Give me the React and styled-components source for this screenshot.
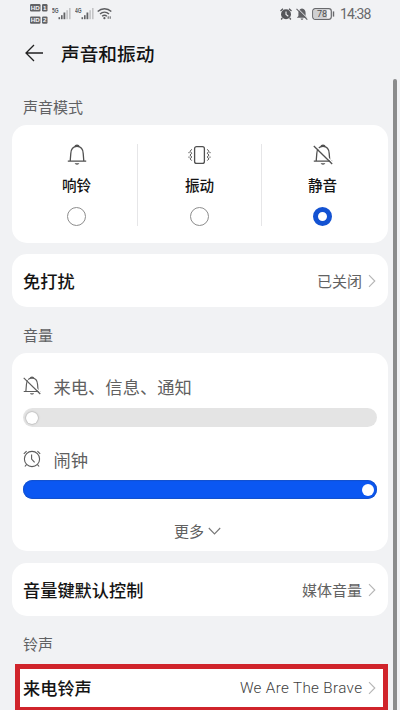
import React from "react";
import styled, { createGlobalStyle } from "styled-components";

const Global = createGlobalStyle`
  * { box-sizing: border-box; }
  html, body { margin: 0; height: 710px; overflow: hidden; background: #f1f2f4; }
  body { font-family: "Noto Sans CJK SC", sans-serif; color: #141414; }
  svg { display: block; flex: none; }
`;

const Screen = styled.div`
  width: 400px;
  height: 710px;
  overflow: hidden;
  display: flex;
  flex-direction: column;
`;

const StatusBar = styled.header`
  height: 28px;
  flex: none;
  display: flex;
  justify-content: space-between;
  padding: 0 29px 0 30px;
`;

const StatusGroup = styled.div`
  display: flex;
  align-items: center;
`;

const Clock = styled.span`
  font: 400 14px/20px Roboto, sans-serif;
  color: #68696b;
  width: 31px;
  white-space: nowrap;
  margin-left: 1px;
  letter-spacing: -0.85px;
`;

const TitleBar = styled.div`
  height: 51px;
  flex: none;
  display: flex;
  align-items: center;
  gap: 17px;
  padding: 0 0 1px 25px;
`;

const Title = styled.h1`
  margin: 0;
  font-size: 18.7px;
  line-height: 28px;
  font-weight: 500;
`;

const Body = styled.div`
  flex: 1;
  min-height: 0;
  display: flex;
  justify-content: space-between;
`;

const Content = styled.main`
  width: 376px;
  margin-left: 12px;
  display: flex;
  flex-direction: column;
`;

const ScrollBar = styled.div`
  width: 4px;
  margin-right: 3px;
  border-radius: 2px 2px 0 0;
  background: #8b8c8c;
`;

const SectionLabel = styled.h2`
  margin: 0;
  height: ${(p) => p.$height}px;
  padding: 17px 0 0 11px;
  flex: none;
  font-size: 15px;
  line-height: 22px;
  font-weight: 400;
  color: #606163;
`;

const Card = styled.section`
  flex: none;
  background: #fff;
  border-radius: 15px;
`;

const ModeCard = styled(Card)`
  height: 118px;
  display: grid;
  grid-template-columns: 126px 124px 126px;
  padding: 19px 0;
  margin-bottom: 11px;
`;

const Mode = styled.div`
  display: flex;
  flex-direction: column;
  align-items: center;
  border-right: ${(p) => (p.$last ? "0" : "1px solid #e6e6e8")};
  padding-left: ${(p) => p.$start || 0}px;
  padding-right: ${(p) => p.$end || 0}px;
`;

const ModeName = styled.span`
  font-size: 14.6px;
  line-height: 22px;
  font-weight: 500;
  margin: 8px 0 11px;
`;

const Radio = styled.span`
  width: 19px;
  height: 19px;
  border-radius: 50%;
  background: #fff;
  border: ${(p) => (p.$on ? "5px solid #1352d2" : "1px solid #8d8d8d")};
`;

const Row = styled(Card)`
  height: 53px;
  display: flex;
  align-items: center;
  justify-content: space-between;
  padding: 0 12px 0 11px;
`;

const RowName = styled.span`
  font-size: 17.2px;
  line-height: 26px;
  font-weight: 500;
`;

const RowValue = styled.span`
  display: flex;
  align-items: center;
  gap: 6px;
  font-size: 15px;
  line-height: 22px;
  color: #626262;
`;

const LatinValue = styled.span`
  font-family: Roboto, sans-serif;
  font-weight: 300;
  font-size: 15.2px;
  letter-spacing: 0.35px;
  margin-right: -0.35px;
  color: #404040;
`;

const VolumeCard = styled(Card)`
  height: 198px;
  padding: 20px 11px 0;
  margin-bottom: 12px;
`;

const Channel = styled.div`
  display: flex;
  align-items: center;
  gap: 12.5px;
  height: 26px;
  font-size: 17.3px;
  color: #606060;
`;

const Track = styled.div`
  height: 19px;
  border-radius: 10px;
  margin: ${(p) => p.$gap};
  padding: 0 3px;
  display: flex;
  align-items: center;
  justify-content: ${(p) => (p.$full ? "flex-end" : "flex-start")};
  background: ${(p) => (p.$full ? "#0b57f2" : "#e4e4e4")};
  box-shadow: ${(p) => (p.$full ? "inset 0 0 1px 1px #1552cc" : "none")};
`;

const Thumb = styled.span`
  width: 12px;
  height: 12px;
  border-radius: 50%;
  background: #fff;
  box-shadow: ${(p) => (p.$shadow ? "0 0 1.5px 0.5px #a9a9a9" : "none")};
`;

const More = styled.div`
  display: flex;
  align-items: center;
  justify-content: center;
  gap: 4px;
  padding-right: 5px;
  font-size: 15px;
  line-height: 22px;
  color: #606060;
`;

const Highlight = styled.div`
  flex: none;
  width: 373px;
  height: 46px;
  margin-left: 3px;
  border: 5px solid #d0242b;
  border-bottom-width: 3px;
  background: #fff;
  display: flex;
  align-items: center;
  justify-content: space-between;
  padding: 0 7px 0 3px;
`;

const Chevron = () => (
  <svg width="8" height="14" viewBox="0 0 8 14" fill="none" stroke="#b5b5b5" strokeWidth="1.1">
    <path d="M1 1.2 6.8 7 1 12.8" />
  </svg>
);

const Bell = ({ off, size = 20, color = "#505050" }) => (
  <svg width={size} height={size * 1.1} viewBox="0 0 20 22" fill="none" stroke={color} strokeWidth="1.3">
    <path d="M.8 17.2h18.4M3.2 17l.6-7.5C4 5.2 6.3 2.3 10 2.3s6 2.9 6.2 7.2l.6 7.5M8 2.4C8.3.7 11.7.7 12 2.4" />
    <path d="M7.7 19.2h4.6c-.4 1.9-4.2 1.9-4.6 0Z" fill={color} stroke="none" />
    {off && <path d="M2.2 1.2 20 19" stroke="#fff" strokeWidth="1.4" />}
    {off && <path d="m.8 2 18.4 18" />}
  </svg>
);

const Vibrate = () => (
  <svg width="23" height="22" viewBox="0 0 23 22" fill="none" stroke="#505050" strokeWidth="1.3">
    <rect x="6.6" y="2.6" width="9.8" height="16.8" rx="2" />
    <path d="m3.7 5.3-1.6 2 1.6 1.9-1.6 1.9 1.6 1.9-1.6 1.9 1.6 1.7M1 8v1.2M1 12.5v1.3M19.3 5.3l1.6 2-1.6 1.9 1.6 1.9-1.6 1.9 1.6 1.9-1.6 1.7M22 8v1.2M22 12.5v1.3" strokeWidth="1" />
  </svg>
);

const Alarm = () => (
  <svg width="18" height="18" viewBox="0 0 18 18" fill="none" stroke="#5c5c5c" strokeWidth="1.1">
    <circle cx="9" cy="9" r="7.6" />
    <path d="M8.6 4.5V9l3 3.4M.8 3.8 3.6 1.1M14.4 1.1l2.8 2.7M3.5 14.7l-1.6 1.8M14.5 14.7l1.6 1.8" />
  </svg>
);

const Back = () => (
  <svg width="19" height="18" viewBox="0 0 19 18" fill="none" stroke="#202020" strokeWidth="1.3">
    <path d="M9 1 1 9l8 8M1 9h17" />
  </svg>
);

const SimLabels = () => (
  <svg width="19" height="22" viewBox="0 0 19 22" fontFamily="Liberation Sans, sans-serif" fontWeight="700" fontSize="6.2" fill="#f5f5f6">
    <g fill="#626366">
      <rect width="10.5" height="7.4" rx="1.2" />
      <rect x="12" width="5.5" height="7.4" rx="1.2" />
      <rect y="12.4" width="10.5" height="7.4" rx="1.2" />
      <rect x="12" y="12.4" width="5.5" height="7.4" rx="1.2" />
    </g>
    <text x=".8" y="5.9">HD</text>
    <text x="13" y="5.9">1</text>
    <text x=".8" y="18.3">HD</text>
    <text x="13" y="18.3">2</text>
  </svg>
);

const Signal = ({ label }) => (
  <svg width="19.5" height="14" viewBox="0 0 19.5 14">
    <text x="0" y="5.9" fontFamily="Liberation Sans, sans-serif" fontWeight="700" fontSize="6.8" textLength="6.6" lengthAdjust="spacingAndGlyphs" fill="#58595c">{label}</text>
    <g fill="#626366">
      <rect x="6.5" y="10.2" width="1.6" height="2" />
      <rect x="9" y="8.2" width="1.6" height="4" />
      <rect x="11.5" y="5.5" width="1.8" height="6.7" />
    </g>
    <g fill="#c3c4c6">
      <rect x="14.3" y="3.2" width="1.6" height="9" />
      <rect x="17" y="1" width="1.6" height="11.2" />
    </g>
  </svg>
);

const Wifi = () => (
  <svg width="15" height="13" viewBox="0 0 15 13" fill="none" stroke="#5c5d60" strokeWidth="1.4">
    <path d="M.7 4.5c3.8-3.7 9.8-3.7 13.6 0M3 7c2.6-2.4 6.4-2.4 9 0M5.1 9.2c1.4-1.2 3.4-1.2 4.8 0" />
    <circle cx="7.4" cy="11.2" r="1.1" fill="#5c5d60" stroke="none" />
    <path d="M11.2 9.3v2.5M13.2 9.3v2.5" strokeWidth="1" />
  </svg>
);

const StatusAlarm = () => (
  <svg width="12" height="12" viewBox="0 0 12 12">
    <circle cx="6" cy="6.3" r="5" fill="#55565a" />
    <path d="M6 3.4v3.1l2.3 1.8" fill="none" stroke="#f1f2f4" strokeWidth="1.1" />
    <path d="M.5 3 3 .7M9 .7 11.5 3M2.3 10l-1.1 1.5M9.7 10l1.1 1.5" stroke="#55565a" strokeWidth="1.3" />
  </svg>
);

const StatusMute = () => (
  <svg width="12" height="12" viewBox="0 0 12 12">
    <path d="M6 .5C3.5.8 2.4 2.5 2.4 5v3L.8 9.7h10.4L9.6 8V5C9.6 2.5 8.5.8 6 .5ZM4.6 10.4h2.8c-.2 1.7-2.6 1.7-2.8 0Z" fill="#606165" />
    <path d="M1.6.3 12 10.7" stroke="#f1f2f4" strokeWidth="1" />
    <path d="m.5.8 10.8 10.8" stroke="#606165" strokeWidth="1.1" />
  </svg>
);

const Battery = () => (
  <svg width="23" height="12" viewBox="0 0 23 12">
    <rect x=".7" y=".7" width="18.6" height="10.6" rx="2.5" fill="#f1f2f4" stroke="#68696c" strokeWidth="1.2" />
    <path d="M2 2h13v8H2z" fill="#cfd0d2" />
    <rect x="20.8" y="3.4" width="1.4" height="5.2" fill="#68696c" />
    <text x="5" y="9.2" fontFamily="Roboto, sans-serif" fontSize="9" fill="#4d4e51">78</text>
  </svg>
);

const MoreArrow = () => (
  <svg width="13" height="9" viewBox="0 0 13 9" fill="none" stroke="#777" strokeWidth="1.1">
    <path d="m.8 1 5.7 6 5.7-6" />
  </svg>
);

const StatusLeft = styled(StatusGroup)`
  gap: 3px;
  align-items: flex-start;
  padding-top: 4px;
`;

const Drop = styled.span`
  padding-top: 3px;
`;

const StatusRight = styled(StatusGroup)`
  gap: 4px;
`;

export default function App() {
  return (
    <Screen>
      <Global />
      <StatusBar>
        <StatusLeft>
          <SimLabels />
          <Drop><Signal label="5G" /></Drop>
          <Drop><Signal label="4G" /></Drop>
          <Drop><Wifi /></Drop>
        </StatusLeft>
        <StatusRight>
          <StatusAlarm />
          <StatusMute />
          <Battery />
          <Clock>14:38</Clock>
        </StatusRight>
      </StatusBar>
      <TitleBar>
        <Back />
        <Title>声音和振动</Title>
      </TitleBar>
      <Body>
        <Content>
          <SectionLabel $height={46}>声音模式</SectionLabel>
          <ModeCard>
            <Mode $start={4}>
              <Bell />
              <ModeName>响铃</ModeName>
              <Radio />
            </Mode>
            <Mode>
              <Vibrate />
              <ModeName>振动</ModeName>
              <Radio />
            </Mode>
            <Mode $last $end={5}>
              <Bell off />
              <ModeName>静音</ModeName>
              <Radio $on />
            </Mode>
          </ModeCard>
          <Row>
            <RowName>免打扰</RowName>
            <RowValue>已关闭<Chevron /></RowValue>
          </Row>
          <SectionLabel $height={46}>音量</SectionLabel>
          <VolumeCard>
            <Channel><Bell off size={18} color="#5c5c5c" />来电、信息、通知</Channel>
            <Track $gap="9px 0 19px"><Thumb $shadow /></Track>
            <Channel><Alarm />闹钟</Channel>
            <Track $gap="8px 0 21px" $full><Thumb /></Track>
            <More>更多<MoreArrow /></More>
          </VolumeCard>
          <Row>
            <RowName>音量键默认控制</RowName>
            <RowValue>媒体音量<Chevron /></RowValue>
          </Row>
          <SectionLabel $height={48}>铃声</SectionLabel>
          <Highlight>
            <RowName>来电铃声</RowName>
            <RowValue><LatinValue>We Are The Brave</LatinValue><Chevron /></RowValue>
          </Highlight>
        </Content>
        <ScrollBar />
      </Body>
    </Screen>
  );
}
